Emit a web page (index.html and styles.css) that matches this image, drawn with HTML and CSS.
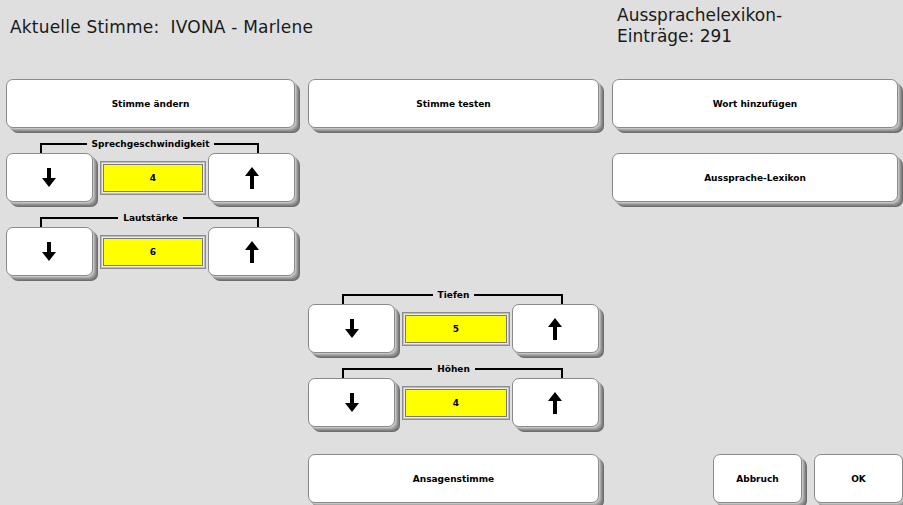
FILE: index.html
```html
<!DOCTYPE html>
<html lang="de">
<head>
  <meta charset="UTF-8" />
  <title>Sprachausgabe</title>
  <link rel="stylesheet" href="styles.css">
</head>
<body>

  <header class="top">
    <div class="voice">Aktuelle Stimme:&nbsp; IVONA - Marlene</div>
    <div class="lexcount">Aussprachelexikon-<br>Einträge: 291</div>
  </header>

  <main class="panel">
    <!-- linke Spalte -->
    <section class="col col-left">
      <button class="btn btn-wide">Stimme ändern</button>

      <div class="stepper stepper-first">
        <div class="stepper-label"><span>Sprechgeschwindigkeit</span></div>
        <div class="stepper-row">
          <button class="btn btn-arrow">
            <svg width="14" height="19" viewBox="0 0 14 19"><path d="M5 0h4v10h5l-7 9-7-9h5z" fill="#000"/></svg>
          </button>
          <div class="value-frame"><div class="value">4</div></div>
          <button class="btn btn-arrow">
            <svg width="14" height="22" viewBox="0 0 14 22"><path d="M7 0l7 9H9v13H5V9H0z" fill="#000"/></svg>
          </button>
        </div>
      </div>

      <div class="stepper">
        <div class="stepper-label"><span>Lautstärke</span></div>
        <div class="stepper-row">
          <button class="btn btn-arrow">
            <svg width="14" height="19" viewBox="0 0 14 19"><path d="M5 0h4v10h5l-7 9-7-9h5z" fill="#000"/></svg>
          </button>
          <div class="value-frame"><div class="value">6</div></div>
          <button class="btn btn-arrow">
            <svg width="14" height="22" viewBox="0 0 14 22"><path d="M7 0l7 9H9v13H5V9H0z" fill="#000"/></svg>
          </button>
        </div>
      </div>
    </section>

    <!-- mittlere Spalte -->
    <section class="col col-mid">
      <button class="btn btn-wide">Stimme testen</button>

      <div class="stepper stepper-low">
        <div class="stepper-label"><span>Tiefen</span></div>
        <div class="stepper-row">
          <button class="btn btn-arrow">
            <svg width="14" height="19" viewBox="0 0 14 19"><path d="M5 0h4v10h5l-7 9-7-9h5z" fill="#000"/></svg>
          </button>
          <div class="value-frame"><div class="value">5</div></div>
          <button class="btn btn-arrow">
            <svg width="14" height="22" viewBox="0 0 14 22"><path d="M7 0l7 9H9v13H5V9H0z" fill="#000"/></svg>
          </button>
        </div>
      </div>

      <div class="stepper">
        <div class="stepper-label"><span>Höhen</span></div>
        <div class="stepper-row">
          <button class="btn btn-arrow">
            <svg width="14" height="19" viewBox="0 0 14 19"><path d="M5 0h4v10h5l-7 9-7-9h5z" fill="#000"/></svg>
          </button>
          <div class="value-frame"><div class="value">4</div></div>
          <button class="btn btn-arrow">
            <svg width="14" height="22" viewBox="0 0 14 22"><path d="M7 0l7 9H9v13H5V9H0z" fill="#000"/></svg>
          </button>
        </div>
      </div>

      <button class="btn btn-wide btn-bottom">Ansagenstimme</button>
    </section>

    <!-- rechte Spalte -->
    <section class="col col-right">
      <button class="btn btn-wide">Wort hinzufügen</button>
      <button class="btn btn-wide btn-lexikon">Aussprache-Lexikon</button>

      <div class="actions">
        <button class="btn btn-small">Abbruch</button>
        <button class="btn btn-small">OK</button>
      </div>
    </section>
  </main>

</body>
</html>
```

FILE: styles.css
```css
:root {
  --bg: #dfdfdf;
  --btn-bg: #ffffff;
  --btn-border: #8a8a8a;
  --value: #ffff00;
  --text: #000000;
}

* {
  box-sizing: border-box;
}

html, body {
  height: 100%;
}

body {
  margin: 0;
  overflow: hidden;
  background: var(--bg);
  color: var(--text);
  font-family: "DejaVu Sans", sans-serif;
}

.top {
  height: 79px;
  display: flex;
  justify-content: space-between;
  font-size: 17px;
  color: #1a1a1a;
}

.voice {
  padding: 17px 0 0 10px;
  line-height: 20px;
  letter-spacing: 0.2px;
}

.lexcount {
  width: 286px;
  padding-top: 5px;
  line-height: 21px;
}

.panel {
  height: 424px;
  display: flex;
  gap: 6px;
  padding-left: 6px;
}

.col {
  display: flex;
  flex-direction: column;
}

.col-left {
  width: 296px;
  padding-right: 7px;
}

.col-mid {
  width: 298px;
  padding-right: 7px;
}

.col-right {
  flex: 1;
  padding-right: 5px;
}

.btn {
  display: flex;
  align-items: center;
  justify-content: center;
  height: 49px;
  padding: 0;
  margin: 0;
  background: var(--btn-bg);
  border: 1px solid var(--btn-border);
  border-radius: 7px;
  font-family: "DejaVu Sans", sans-serif;
  font-size: 9px;
  font-weight: bold;
  color: var(--text);
  box-shadow:
    1px 1px 0 #c6c6c6,
    2px 2px 0 #ababab,
    3px 3px 0 #949494,
    4px 4px 0 #7e7e7e,
    5px 5px 0 #6e6e6e;
}

.btn-wide {
  width: 100%;
  flex: 0 0 auto;
}

.btn-lexikon {
  margin-top: 25px;
}

.btn-bottom {
  margin-top: auto;
}

.actions {
  margin-top: auto;
  margin-right: -5px;
  display: flex;
  justify-content: flex-end;
  gap: 12px;
}

.btn-small {
  width: 89px;
}

/* Regler mit Klammer-Beschriftung */
.stepper {
  margin-top: 7px;
}

.stepper-low {
  margin-top: 158px;
}

.stepper-label {
  position: relative;
  height: 18px;
  text-align: center;
  font-size: 9px;
  font-weight: bold;
  line-height: 18px;
}

.stepper-label::before {
  content: "";
  position: absolute;
  left: 34px;
  right: 36px;
  top: 8px;
  bottom: 0;
  border: 2px solid #000;
  border-bottom: none;
}

.stepper-label span {
  position: relative;
  padding: 0 5px;
  background: var(--bg);
}

.stepper-row {
  display: flex;
  align-items: center;
}

.btn-arrow {
  flex: 0 0 30%;
}

.value-frame {
  flex: 1;
  height: 34px;
  margin: 0 2px 0 7px;
  padding: 2px;
  background: #bdbdbd;
  border: 1px solid #8c8c8c;
}

.value {
  height: 100%;
  display: flex;
  align-items: center;
  justify-content: center;
  background: var(--value);
  border: 1px solid #7a7a7a;
  box-shadow: 0 0 0 1px #ececec;
  font-size: 9px;
  font-weight: bold;
}
```
